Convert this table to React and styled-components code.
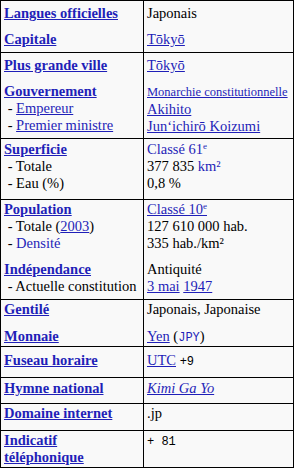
import styled, { createGlobalStyle } from "styled-components";

const GlobalStyle = createGlobalStyle`
  html, body {
    margin: 0;
    padding: 0;
    background: #ffffff;
  }
  body {
    font-family: "Liberation Serif", "Times New Roman", serif;
  }
`;

const LINK = "#1f1fb8";

const Infobox = styled.div`
  width: 294px;
  box-sizing: border-box;
  border: 1px solid #000;
  background: #f9f9f9;
  color: #000;
  font-size: 14.5px;
  line-height: 17px;
`;

const Row = styled.div`
  display: grid;
  grid-template-columns: 143px 1fr;
  box-sizing: border-box;
  height: ${(p) => p.$h}px;
  border-bottom: ${(p) => (p.$last ? "none" : "1px solid #000")};
  & > * {
    padding-top: ${(p) => p.$pad ?? 2}px;
    gap: ${(p) => p.$gap ?? 9}px;
  }
`;

const Cell = styled.div`
  display: flex;
  flex-direction: column;
  box-sizing: border-box;
  padding-left: 3px;
  padding-right: 4px;
  min-width: 0;
  &:first-child {
    border-right: 1px solid #000;
  }
`;

const Group = styled.div`
  display: flex;
  flex-direction: column;
`;

const Line = styled.div`
  white-space: nowrap;
`;

const Heading = styled.a`
  font-weight: bold;
  color: ${LINK};
  text-decoration: underline;
`;

const Link = styled.a`
  color: ${LINK};
  text-decoration: ${(p) => (p.$plain ? "none" : "underline")};
  font-style: ${(p) => (p.$italic ? "italic" : "normal")};
`;

const Sub = styled.div`
  white-space: nowrap;
  &::before {
    content: "\u00a0- ";
  }
`;

const Small = styled.span`
  font-size: 12.5px;
`;

const Mono = styled.span`
  font-family: "Liberation Mono", "DejaVu Sans Mono", monospace;
  font-size: 12px;
  color: ${(p) => (p.$blue ? LINK : "#000")};
`;

const Sup = styled.sup`
  font-size: 9px;
  line-height: 0;
  vertical-align: 5px;
`;

export default function App() {
  return (
    <>
      <GlobalStyle />
      <Infobox>
        <Row $h={52} $pad={4}>
          <Cell>
            <Group><Heading href="#">Langues officielles</Heading></Group>
            <Group><Heading href="#">Capitale</Heading></Group>
          </Cell>
          <Cell>
            <Group><Line>Japonais</Line></Group>
            <Group><Line><Link href="#">Tōkyō</Link></Line></Group>
          </Cell>
        </Row>

        <Row $h={86} $pad={4}>
          <Cell>
            <Group><Heading href="#">Plus grande ville</Heading></Group>
            <Group>
              <Heading href="#">Gouvernement</Heading>
              <Sub><Link href="#">Empereur</Link></Sub>
              <Sub><Link href="#">Premier ministre</Link></Sub>
            </Group>
          </Cell>
          <Cell>
            <Group><Line><Link href="#">Tōkyō</Link></Line></Group>
            <Group>
              <Line><Small><Link href="#">Monarchie constitutionnelle</Link></Small></Line>
              <Line><Link href="#">Akihito</Link></Line>
              <Line><Link href="#">Junʻichirō Koizumi</Link></Line>
            </Group>
          </Cell>
        </Row>

        <Row $h={61} $pad={2}>
          <Cell>
            <Group>
              <Heading href="#">Superficie</Heading>
              <Sub>Totale</Sub>
              <Sub>Eau (%)</Sub>
            </Group>
          </Cell>
          <Cell>
            <Group>
              <Line><Link href="#" $plain>Classé 61<Sup>e</Sup></Link></Line>
              <Line>377 835 <Link href="#" $plain>km²</Link></Line>
              <Line>0,8 %</Line>
            </Group>
          </Cell>
        </Row>

        <Row $h={100} $pad={1}>
          <Cell>
            <Group>
              <Heading href="#">Population</Heading>
              <Sub>Totale (<Link href="#">2003</Link>)</Sub>
              <Sub><Link href="#" $plain>Densité</Link></Sub>
            </Group>
            <Group>
              <Heading href="#">Indépendance</Heading>
              <Sub>Actuelle constitution</Sub>
            </Group>
          </Cell>
          <Cell>
            <Group>
              <Line><Link href="#">Classé 10<Sup>e</Sup></Link></Line>
              <Line>127 610 000 hab.</Line>
              <Line>335 hab./km²</Line>
            </Group>
            <Group>
              <Line>Antiquité</Line>
              <Line><Link href="#">3 mai</Link> <Link href="#">1947</Link></Line>
            </Group>
          </Cell>
        </Row>

        <Row $h={47} $pad={1} $gap={10}>
          <Cell>
            <Group><Heading href="#">Gentilé</Heading></Group>
            <Group><Heading href="#">Monnaie</Heading></Group>
          </Cell>
          <Cell>
            <Group><Line>Japonais, Japonaise</Line></Group>
            <Group>
              <Line><Link href="#">Yen</Link> (<Mono $blue>JPY</Mono>)</Line>
            </Group>
          </Cell>
        </Row>

        <Row $h={31} $pad={5}>
          <Cell><Group><Heading href="#">Fuseau horaire</Heading></Group></Cell>
          <Cell>
            <Group><Line><Link href="#">UTC</Link> <Mono>+9</Mono></Line></Group>
          </Cell>
        </Row>

        <Row $h={26} $pad={2}>
          <Cell><Group><Heading href="#">Hymne national</Heading></Group></Cell>
          <Cell>
            <Group><Line><Link href="#" $italic>Kimi Ga Yo</Link></Line></Group>
          </Cell>
        </Row>

        <Row $h={27} $pad={1}>
          <Cell><Group><Heading href="#">Domaine internet</Heading></Group></Cell>
          <Cell><Group><Line>.jp</Line></Group></Cell>
        </Row>

        <Row $h={36} $pad={1} $last>
          <Cell><Group><Heading href="#">Indicatif téléphonique</Heading></Group></Cell>
          <Cell><Group><Line><Mono>+ 81</Mono></Line></Group></Cell>
        </Row>
      </Infobox>
    </>
  );
}
